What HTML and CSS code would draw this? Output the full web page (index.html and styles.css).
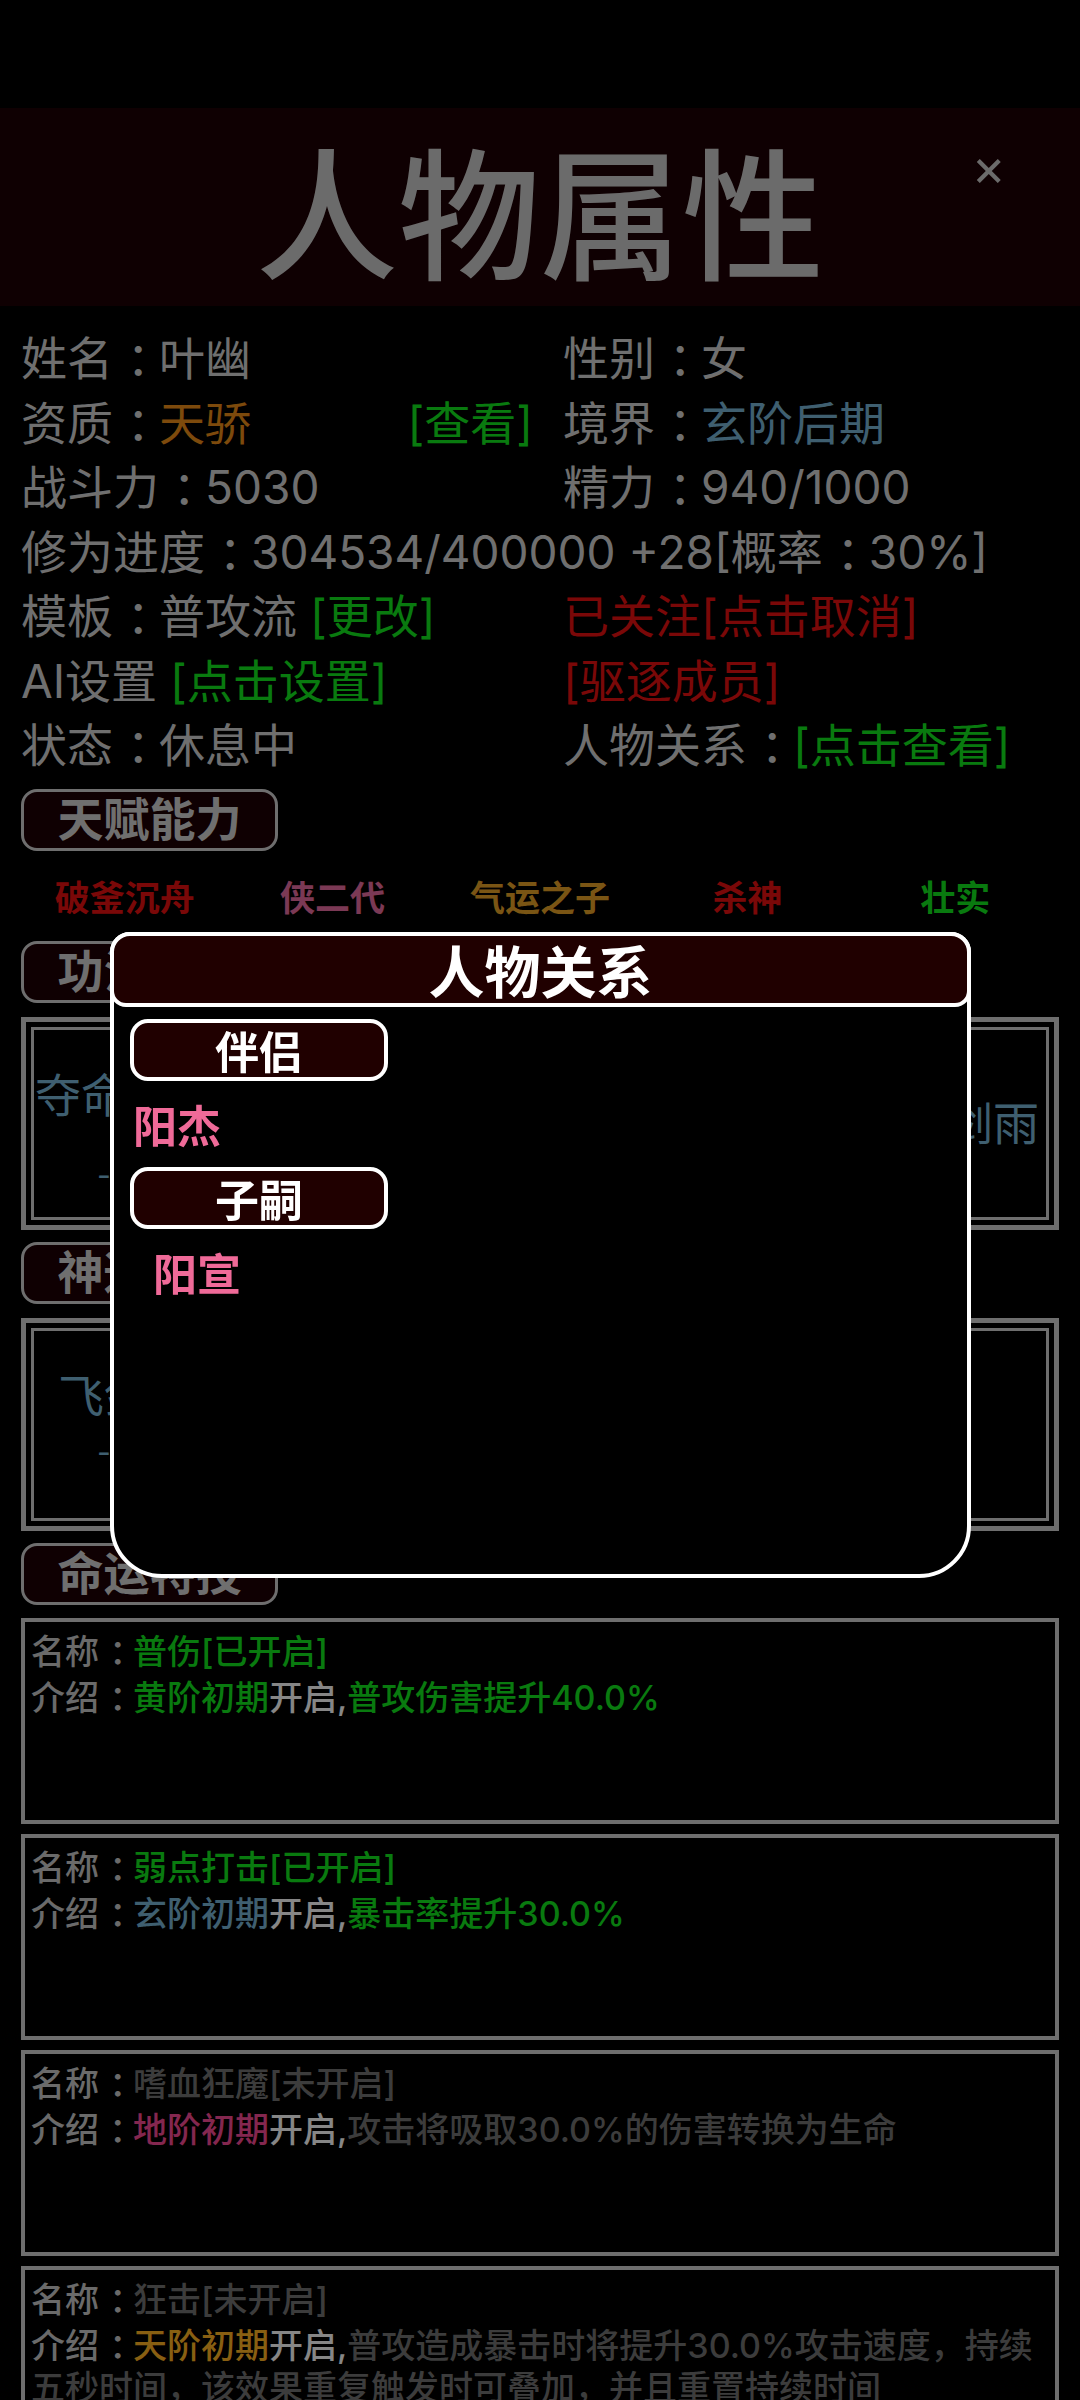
FILE: index.html
```html
<!DOCTYPE html>
<html lang="zh-CN">
<head>
    <meta charset="UTF-8">
    <meta name="viewport" content="width=device-width, initial-scale=1.0">
    <title>人物属性</title>
    <link rel="stylesheet" href="styles.css">
</head>
<body>
    <div class="statusbar"></div>
    <div class="header">
        <h1>人物属性</h1>
        <span class="close">×</span>
    </div>

    <div class="info">
        <div>姓名<span class="c">：</span>叶幽</div>
        <div>性别<span class="c">：</span>女</div>
        <div class="split"><span>资质<span class="c">：</span><span class="orange">天骄</span></span><span class="green">[查看]</span></div>
        <div>境界<span class="c">：</span><span class="blue">玄阶后期</span></div>
        <div>战斗力<span class="c">：</span>5030</div>
        <div>精力<span class="c">：</span>940/1000</div>
        <div class="wide">修为进度<span class="c">：</span>304534/400000 +28[概率<span class="c">：</span>30%]</div>
        <div>模板<span class="c">：</span>普攻流 <span class="green">[更改]</span></div>
        <div class="red">已关注[点击取消]</div>
        <div>AI设置 <span class="green">[点击设置]</span></div>
        <div class="red">[驱逐成员]</div>
        <div>状态<span class="c">：</span>休息中</div>
        <div>人物关系<span class="c">：</span><span class="green">[点击查看]</span></div>
    </div>

    <div class="pill first">天赋能力</div>
    <div class="talents">
        <span class="red">破釜沉舟</span>
        <span class="pink">侠二代</span>
        <span class="amber">气运之子</span>
        <span class="red">杀神</span>
        <span class="green">壮实</span>
    </div>

    <div class="pill">功法秘籍</div>
    <div class="slots">
        <div class="slots-inner">
            <div class="slot tall">夺命斩<small>-</small></div>
            <div class="slot wide-slot">漫天剑雨</div>
        </div>
    </div>

    <div class="pill">神通秘术</div>
    <div class="slots">
        <div class="slots-inner">
            <div class="slot">飞剑<small>-</small></div>
        </div>
    </div>

    <div class="pill">命运特技</div>

    <div class="skill-card top">
        <div class="name">名称<span class="c">：</span><span class="green">普伤[已开启]</span></div>
        <div class="desc">介绍<span class="c">：</span><span class="green">黄阶初期</span><span class="bright">开启,</span><span class="green">普攻伤害提升40.0%</span></div>
    </div>
    <div class="skill-card">
        <div class="name">名称<span class="c">：</span><span class="green">弱点打击[已开启]</span></div>
        <div class="desc">介绍<span class="c">：</span><span class="blue">玄阶初期</span><span class="bright">开启,</span><span class="green">暴击率提升30.0%</span></div>
    </div>
    <div class="skill-card">
        <div class="name">名称<span class="c">：</span><span class="off">嗜血狂魔[未开启]</span></div>
        <div class="desc">介绍<span class="c">：</span><span class="magenta">地阶初期</span><span class="bright">开启,</span><span class="off">攻击将吸取30.0%的伤害转换为生命</span></div>
    </div>
    <div class="skill-card">
        <div class="name">名称<span class="c">：</span><span class="off">狂击[未开启]</span></div>
        <div class="desc">介绍<span class="c">：</span><span class="gold">天阶初期</span><span class="bright">开启,</span><span class="off">普攻造成暴击时将提升30.0%攻击速度，持续五秒时间，该效果重复触发时可叠加，并且重置持续时间</span></div>
    </div>

    <div class="mask"></div>

    <div class="modal">
        <div class="modal-head">人物关系</div>
        <div class="modal-body">
            <div class="rel-pill">伴侣</div>
            <div class="rel-name">阳杰</div>
            <div class="rel-pill">子嗣</div>
            <div class="rel-name child">阳宣</div>
        </div>
    </div>
</body>
</html>
```

FILE: styles.css
```css
* {
    box-sizing: border-box;
    margin: 0;
    padding: 0;
}
body {
    width: 1080px;
    background: #000;
    color: #cacaca;
    font-family: Inter, "Noto Sans CJK SC", sans-serif;
    font-size: 46px;
    overflow: hidden;
}
/* full-width colon, drawn centred in its cell */
.c {
    display: inline-block;
    width: 1em;
    padding-left: 0.3em;
    font-family: "Noto Sans CJK SC", sans-serif;
    line-height: 1;
}
.statusbar {
    height: 108px;
}
.header {
    position: relative;
    height: 198px;
    background: #1c0004;
    display: flex;
    justify-content: center;
    align-items: center;
}
.header h1 {
    font-family: "Noto Sans CJK SC", sans-serif;
    font-size: 142px;
    font-weight: 500;
    line-height: 1;
    color: #c4c4c4;
}
.close {
    position: absolute;
    right: 74px;
    top: 34px;
    font-size: 52px;
    line-height: 1;
    color: #c4c4c4;
}

/* colours (the page sits under a dim mask) */
.orange { color: #e38816; }
.blue { color: #73adcc; }
.green { color: #12de1d; }
.red { color: #de0f0f; }
.pink { color: #e0699b; }
.amber { color: #de9b26; }
.gold { color: #f8ae22; }
.magenta { color: #f04890; }
.off { color: #6e6e6e; }
.bright { color: #f4f4f4; }

.info {
    display: grid;
    grid-template-columns: 512px 1fr;
    column-gap: 30px;
    padding: 20px 21px 0;
    line-height: 64.5px;
    white-space: nowrap;
}
.info > div {
    height: 64.5px;
}
.info .wide {
    grid-column: 1 / -1;
}
.split {
    display: flex;
    justify-content: space-between;
}

.pill {
    width: 257px;
    height: 62px;
    margin: 12px 0 0 21px;
    border: 3px solid #c8c8c8;
    border-radius: 16px;
    background: #1c0004;
    text-align: center;
    line-height: 54px;
    font-size: 46px;
    font-weight: 700;
}
.pill.first {
    margin-top: 11px;
}
.talents {
    display: grid;
    grid-template-columns: repeat(5, 1fr);
    align-items: center;
    height: 90px;
    padding: 0 21px;
    text-align: center;
    font-size: 35px;
    font-weight: 700;
}
.talents + .pill {
    margin-top: 0;
}

.slots {
    height: 213px;
    margin: 14px 21px 0;
    border: 5px solid #c8c8c8;
    padding: 5px;
}
.slots-inner {
    height: 100%;
    border: 3px solid #c8c8c8;
    display: flex;
    justify-content: space-between;
    align-items: center;
    padding: 0 7px 0 0;
}
.slot {
    width: 140px;
    text-align: center;
    color: #73adcc;
    line-height: 56px;
    white-space: nowrap;
}
.slot small {
    display: block;
    font-size: 30px;
}
.slot.tall {
    align-self: flex-start;
    padding-top: 37px;
}
.slot.tall small {
    margin-top: 24px;
}
.wide-slot {
    width: auto;
}

.skill-card {
    height: 206px;
    margin: 10px 21px 0;
    border: 4px solid #c8c8c8;
    padding: 8px 6px;
    font-size: 34px;
    font-weight: 500;
    color: #c1c1c1;
}
.skill-card.top {
    margin-top: 13px;
}
.skill-card .name {
    line-height: 44px;
}
.skill-card .desc {
    margin-top: 3px;
    line-height: 42px;
}

.mask {
    position: fixed;
    inset: 0;
    background: rgba(0, 0, 0, 0.45);
}
.modal {
    position: absolute;
    top: 932px;
    left: 110px;
    width: 861px;
    height: 646px;
    background: #000;
    border: 4px solid #fff;
    border-radius: 20px 20px 52px 52px;
    font-family: "Noto Sans CJK SC", sans-serif;
}
.modal-head {
    height: 75px;
    margin: -4px -4px 0;
    border: 4px solid #fff;
    border-radius: 20px 20px 16px 16px;
    background: #200000;
    color: #fff;
    text-align: center;
    font-size: 56px;
    font-weight: 700;
    line-height: 66px;
}
.modal-body {
    padding: 12px 16px 0;
}
.rel-pill {
    width: 258px;
    height: 62px;
    border: 4px solid #fff;
    border-radius: 18px;
    background: #200000;
    color: #fff;
    text-align: center;
    font-size: 44px;
    font-weight: 700;
    line-height: 54px;
}
.rel-name {
    height: 86px;
    padding-left: 3px;
    line-height: 86px;
    font-size: 44px;
    font-weight: 700;
    color: #ef6a98;
}
.rel-name.child {
    padding-left: 23px;
}
```
